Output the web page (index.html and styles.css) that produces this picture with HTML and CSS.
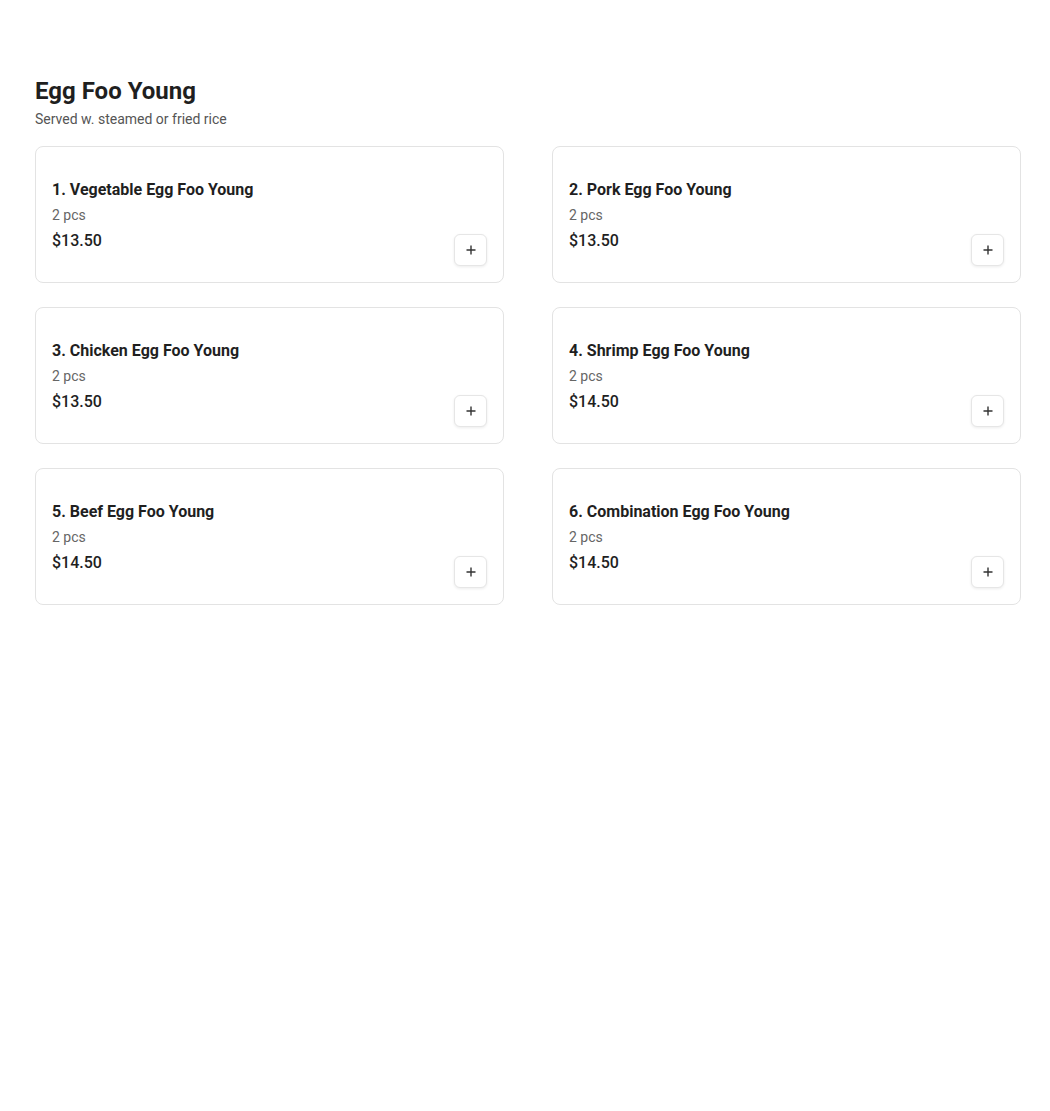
FILE: index.html
```html
<!DOCTYPE html>
<html lang="en">
<head>
<meta charset="utf-8">
<title>Egg Foo Young</title>
<link rel="stylesheet" href="styles.css">
</head>
<body>
<main class="page">
  <section class="category">
    <h2 class="cat-title">Egg Foo Young</h2>
    <p class="cat-desc">Served w. steamed or fried rice</p>
    <div class="grid">
      <div class="card">
        <div class="info">
          <h3 class="name">1. Vegetable Egg Foo Young</h3>
          <p class="desc">2 pcs</p>
          <p class="price">$13.50</p>
        </div>
        <button class="add" aria-label="Add"><svg viewBox="0 0 12 12" width="12" height="12"><path d="M6 1.5v9M1.5 6h9" stroke="#333" stroke-width="1.4" fill="none"/></svg></button>
      </div>
      <div class="card">
        <div class="info">
          <h3 class="name">2. Pork Egg Foo Young</h3>
          <p class="desc">2 pcs</p>
          <p class="price">$13.50</p>
        </div>
        <button class="add" aria-label="Add"><svg viewBox="0 0 12 12" width="12" height="12"><path d="M6 1.5v9M1.5 6h9" stroke="#333" stroke-width="1.4" fill="none"/></svg></button>
      </div>
      <div class="card">
        <div class="info">
          <h3 class="name">3. Chicken Egg Foo Young</h3>
          <p class="desc">2 pcs</p>
          <p class="price">$13.50</p>
        </div>
        <button class="add" aria-label="Add"><svg viewBox="0 0 12 12" width="12" height="12"><path d="M6 1.5v9M1.5 6h9" stroke="#333" stroke-width="1.4" fill="none"/></svg></button>
      </div>
      <div class="card">
        <div class="info">
          <h3 class="name">4. Shrimp Egg Foo Young</h3>
          <p class="desc">2 pcs</p>
          <p class="price">$14.50</p>
        </div>
        <button class="add" aria-label="Add"><svg viewBox="0 0 12 12" width="12" height="12"><path d="M6 1.5v9M1.5 6h9" stroke="#333" stroke-width="1.4" fill="none"/></svg></button>
      </div>
      <div class="card">
        <div class="info">
          <h3 class="name">5. Beef Egg Foo Young</h3>
          <p class="desc">2 pcs</p>
          <p class="price">$14.50</p>
        </div>
        <button class="add" aria-label="Add"><svg viewBox="0 0 12 12" width="12" height="12"><path d="M6 1.5v9M1.5 6h9" stroke="#333" stroke-width="1.4" fill="none"/></svg></button>
      </div>
      <div class="card">
        <div class="info">
          <h3 class="name">6. Combination Egg Foo Young</h3>
          <p class="desc">2 pcs</p>
          <p class="price">$14.50</p>
        </div>
        <button class="add" aria-label="Add"><svg viewBox="0 0 12 12" width="12" height="12"><path d="M6 1.5v9M1.5 6h9" stroke="#333" stroke-width="1.4" fill="none"/></svg></button>
      </div>
    </div>
  </section>
</main>
</body>
</html>
```

FILE: styles.css
```css
* { box-sizing: border-box; }
html, body { margin: 0; padding: 0; background: #fff; }
body {
  font-family: Roboto, "Liberation Sans", Arial, sans-serif;
  color: #1f1f1f;
}
.page {
  padding: 76px 29px 0 35px;
}
.cat-title {
  margin: 0;
  font-size: 24px;
  line-height: 30px;
  font-weight: 700;
  color: #1f1f1f;
}
.cat-desc {
  margin: 3px 0 0;
  font-size: 14px;
  line-height: 20px;
  color: #555;
}
.grid {
  margin-top: 17px;
  display: grid;
  grid-template-columns: 1fr 1fr;
  column-gap: 48px;
  row-gap: 24px;
}
.card {
  display: flex;
  align-items: center;
  justify-content: space-between;
  min-height: 137px;
  padding: 16px;
  border: 1px solid #e3e3e3;
  border-radius: 8px;
  background: #fff;
}
.info { padding-top: 2px; }
.name {
  margin: 0;
  font-size: 16px;
  line-height: 24px;
  font-weight: 700;
  color: #1f1f1f;
}
.desc {
  margin: 3px 0 0;
  font-size: 14px;
  line-height: 20px;
  color: #666;
}
.price {
  margin: 4px 0 0;
  font-size: 16px;
  line-height: 24px;
  font-weight: 500;
  color: #1f1f1f;
}
.add {
  align-self: flex-end;
  width: 33px;
  height: 32px;
  padding: 0;
  display: flex;
  align-items: center;
  justify-content: center;
  background: #fff;
  border: 1px solid #e6e6e6;
  border-radius: 6px;
  box-shadow: 0 1px 3px rgba(0,0,0,0.08);
  cursor: pointer;
}
.add svg { display: block; }
```
